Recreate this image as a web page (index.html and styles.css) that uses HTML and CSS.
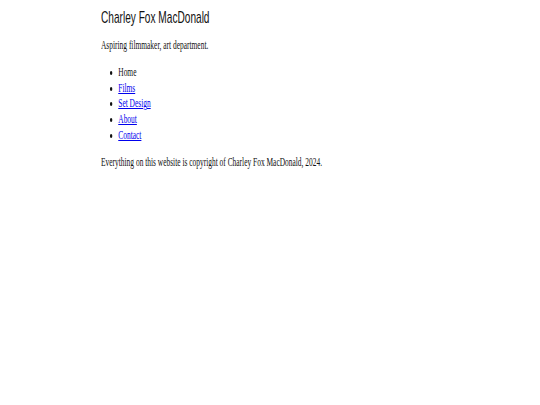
FILE: index.html
```html
<!DOCTYPE html>
<html lang="en">
<head>
<meta charset="utf-8">
<title>Charley Fox MacDonald</title>
<link rel="stylesheet" href="styles.css">
</head>
<body>
<main class="page">
  <h1 class="title">Charley Fox MacDonald</h1>
  <p class="tagline">Aspiring filmmaker, art department.</p>
  <ul class="nav">
    <li>Home</li>
    <li><a href="#">Films</a></li>
    <li><a href="#">Set Design</a></li>
    <li><a href="#">About</a></li>
    <li><a href="#">Contact</a></li>
  </ul>
  <p class="copyright">Everything on this website is copyright of Charley Fox MacDonald, 2024.</p>
</main>
</body>
</html>
```

FILE: styles.css
```css
html, body {
  margin: 0;
  padding: 0;
  background: #ffffff;
}
body {
  font-family: "Liberation Serif", "Times New Roman", serif;
  font-size: 12.5px;
  line-height: 15.8px;
  color: #111111;
}
.page {
  width: 420px;
  margin-left: 101px;
  padding-top: 9px;
  transform: scaleX(0.595);
  transform-origin: left top;
}
.title {
  margin: 0 0 11px 0;
  font-family: "Liberation Sans", Arial, sans-serif;
  font-weight: normal;
  font-size: 17px;
  line-height: 18px;
  color: #111111;
}
.tagline {
  margin: 0 0 11px 0;
}
.nav {
  margin: 0 0 11px 0;
  padding-left: 29px;
  list-style: disc;
}
.nav a {
  color: #0000ee;
}
.copyright {
  margin: 0;
}
```
